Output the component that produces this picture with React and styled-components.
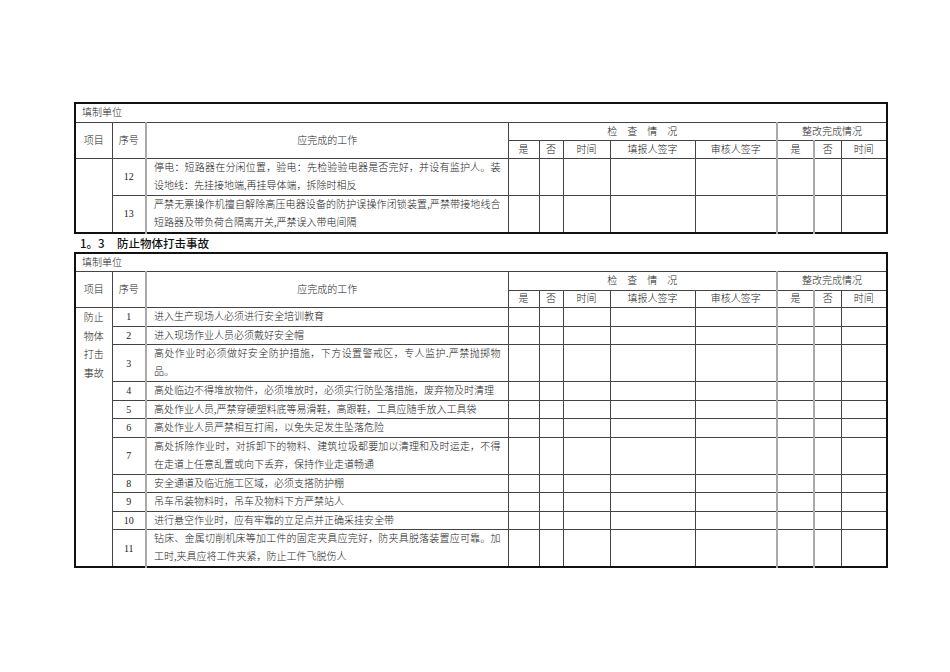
import React from "react";
import styled, { createGlobalStyle } from "styled-components";

const GlobalStyle = createGlobalStyle`
  html, body {
    margin: 0;
    padding: 0;
    background: #fff;
  }
  body {
    font-family: "Liberation Serif", "Noto Sans CJK SC", serif;
    color: #222;
  }
`;

const Page = styled.div`
  padding: 102px 0 0 74px;
  width: 812px;
`;

const Sheet = styled.table`
  width: 812px;
  table-layout: fixed;
  border-collapse: collapse;
  border: 2px solid #111;
  font-size: 10px;
  font-weight: 300;
`;

const Cell = styled.td`
  box-sizing: border-box;
  border: 1px solid #444;
  border-left: ${({ $soft }) => ($soft ? "2px solid #aaa" : "1px solid #444")};
  padding: ${({ $pad }) => $pad || "0"};
  height: ${({ $h }) => $h || 17.5}px;
  text-align: ${({ $align }) => $align || "center"};
  vertical-align: ${({ $valign }) => $valign || "middle"};
  line-height: 15px;
  white-space: nowrap;
  overflow: hidden;
`;

const Line = styled.div`
  line-height: ${({ $tight }) => ($tight ? 15 : 18)}px;
  text-align: left;
  text-align-last: ${({ $full }) => ($full ? "justify" : "auto")};
`;

const Stack = styled.div`
  padding-top: 1px;
  line-height: 18.5px;
`;

const Heading = styled.div`
  font-family: "Noto Sans CJK SC", sans-serif;
  font-size: 11.5px;
  font-weight: 500;
  color: #111;
  height: 18px;
  line-height: 18px;
  padding-left: 6px;
  display: flex;
  align-items: center;
`;

const HeadNum = styled.span`
  width: 37px;
`;

const widths = [37, 34, 362, 31, 24, 47, 85, 82, 37, 27, 46];

const HeaderRows = () => (
  <>
    <tr>
      <Cell colSpan={11} $align="left" $pad="0 6px" $h={19}>
        填制单位
      </Cell>
    </tr>
    <tr>
      <Cell rowSpan={2}>项目</Cell>
      <Cell rowSpan={2}>序号</Cell>
      <Cell rowSpan={2} $soft>
        应完成的工作
      </Cell>
      <Cell colSpan={5} $h={18.5}>
        检　查　情　况
      </Cell>
      <Cell colSpan={3} $soft>
        整改完成情况
      </Cell>
    </tr>
    <tr>
      <Cell $h={17.5}>是</Cell>
      <Cell>否</Cell>
      <Cell>时间</Cell>
      <Cell>填报人签字</Cell>
      <Cell>审核人签字</Cell>
      <Cell $soft>是</Cell>
      <Cell $soft>否</Cell>
      <Cell>时间</Cell>
    </tr>
  </>
);

const BlankChecks = ({ h }) => (
  <>
    <Cell $h={h} />
    <Cell />
    <Cell />
    <Cell />
    <Cell />
    <Cell $soft />
    <Cell $soft />
    <Cell />
  </>
);

const WorkRow = ({ item, lead }) => {
  const multi = item.lines.length > 1;
  const h = multi ? 37 : 18.5;
  return (
    <tr>
      {lead}
      <Cell $h={h}>{item.no}</Cell>
      <Cell $soft $align="left" $pad="0 7px" $h={h}>
        {item.lines.map((t, i) => (
          <Line key={i} $tight={!multi} $full={i < item.lines.length - 1}>
            {t}
          </Line>
        ))}
      </Cell>
      <BlankChecks h={h} />
    </tr>
  );
};

const Table = ({ rows, topic }) => (
  <Sheet>
    <colgroup>
      {widths.map((w, i) => (
        <col key={i} style={{ width: w }} />
      ))}
    </colgroup>
    <tbody>
      <HeaderRows />
      {rows.map((item, i) => (
        <WorkRow
          key={item.no}
          item={item}
          lead={
            i === 0 ? (
              <Cell rowSpan={rows.length} $valign="top">
                <Stack>
                  {topic.map((t) => (
                    <div key={t}>{t}</div>
                  ))}
                </Stack>
              </Cell>
            ) : null
          }
        />
      ))}
    </tbody>
  </Sheet>
);

const electric = [
  {
    no: 12,
    lines: [
      "停电：短路器在分闲位置，验电：先检验验电器是否完好，并设有监护人。装",
      "设地线：先挂接地端,再挂导体端，拆除时相反",
    ],
  },
  {
    no: 13,
    lines: [
      "严禁无票操作机擅自解除高压电器设备的防护误操作闭锁装置,严禁带接地线合",
      "短路器及带负荷合隔离开关,严禁误入带电间隔",
    ],
  },
];

const strike = [
  { no: 1, lines: ["进入生产现场人必须进行安全培训教育"] },
  { no: 2, lines: ["进入现场作业人员必须戴好安全帽"] },
  {
    no: 3,
    lines: [
      "高处作业时必须做好安全防护措施，下方设置警戒区，专人监护.严禁抛掷物",
      "品。",
    ],
  },
  {
    no: 4,
    lines: ["高处临边不得堆放物件，必须堆放时，必须实行防坠落措施，废弃物及时清理"],
  },
  {
    no: 5,
    lines: ["高处作业人员,严禁穿硬塑料底等易滑鞋，高跟鞋，工具应随手放入工具袋"],
  },
  { no: 6, lines: ["高处作业人员严禁相互打闹，以免失足发生坠落危险"] },
  {
    no: 7,
    lines: [
      "高处拆除作业时，对拆卸下的物料、建筑垃圾都要加以清理和及时运走，不得",
      "在走道上任意乱置或向下丢弃，保持作业走道畅通",
    ],
  },
  { no: 8, lines: ["安全通道及临近施工区域，必须支搭防护棚"] },
  { no: 9, lines: ["吊车吊装物料时，吊车及物料下方严禁站人"] },
  { no: 10, lines: ["进行悬空作业时，应有牢靠的立足点并正确采挂安全带"] },
  {
    no: 11,
    lines: [
      "钻床、金属切削机床等加工件的固定夹具应完好，防夹具脱落装置应可靠。加",
      "工时,夹具应将工件夹紧，防止工件飞脱伤人",
    ],
  },
];

export default function App() {
  return (
    <>
      <GlobalStyle />
      <Page>
        <Table rows={electric} topic={[]} />
        <Heading>
          <HeadNum>1。3</HeadNum>
          防止物体打击事故
        </Heading>
        <Table rows={strike} topic={["防止", "物体", "打击", "事故"]} />
      </Page>
    </>
  );
}
